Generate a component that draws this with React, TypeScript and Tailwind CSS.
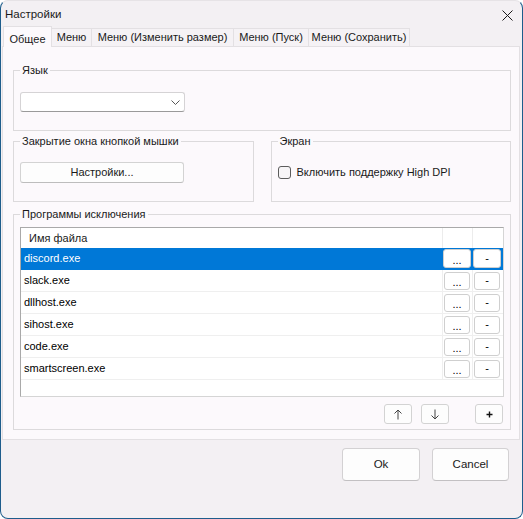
import React from "react";

const files = ["discord.exe", "slack.exe", "dllhost.exe", "sihost.exe", "code.exe", "smartscreen.exe"];

function GroupBox({ label, className, children }: { label: string; className?: string; children: React.ReactNode }) {
  return (
    <fieldset className={"min-w-0 border border-[#dcdadc] px-[6px] " + (className ?? "")}>
      <legend className="px-[2px] text-[11px] leading-[14px] text-[#1a1a1a]">{label}</legend>
      {children}
    </fieldset>
  );
}

function CellButton({ children, selected }: { children: React.ReactNode; selected?: boolean }) {
  return (
    <div
      className={
        "flex items-center justify-center rounded-[3px] border border-[#cfcfcf] bg-white text-[11px] leading-none text-black " +
        (selected ? "h-[19px] w-[28px]" : "h-[18px] w-[26px]")
      }
    >
      {children}
    </div>
  );
}

function SmallButton({ children }: { children: React.ReactNode }) {
  return (
    <div className="flex h-[20px] w-[28px] items-center justify-center rounded-[3px] border border-[#d3d3d3] bg-[#fdfdfd]">
      {children}
    </div>
  );
}

export default function App() {
  return (
    <div className="h-[519px] w-[523px] bg-white font-['Liberation_Sans',Arial,sans-serif] text-[#1a1a1a]">
      <div className="flex h-full flex-col overflow-hidden rounded-[8px] border border-[#1e5d8c] border-t-[#e6e3e6] bg-[#f3f0f3]">
        {/* title bar */}
        <div className="flex h-[25px] items-center justify-between pl-[4px] pr-[9px] pt-[3px]">
          <span className="text-[11.5px] leading-none">Настройки</span>
          <svg width="11" height="11" viewBox="0 0 11 11">
            <path d="M0.5 0.5 L10.5 10.5 M10.5 0.5 L0.5 10.5" stroke="#1a1a1a" strokeWidth="1" />
          </svg>
        </div>

        {/* tabs */}
        <div className="flex h-[20px] items-end pl-[2px] text-[11px]">
          <div className="relative z-10 -mb-px flex h-[21px] w-[49px] items-start justify-center border border-b-0 border-[#e3e0e3] bg-[#fcf9fc] pt-[4px]">
            Общее
          </div>
          <div className="flex h-[18px] w-[40px] items-center justify-center border-r border-t border-[#e3e0e3] bg-[#f5f2f5]">
            Меню
          </div>
          <div className="flex h-[18px] w-[142px] items-center justify-center border-r border-t border-[#e3e0e3] bg-[#f5f2f5]">
            Меню (Изменить размер)
          </div>
          <div className="flex h-[18px] w-[75px] items-center justify-center border-r border-t border-[#e3e0e3] bg-[#f5f2f5]">
            Меню (Пуск)
          </div>
          <div className="flex h-[18px] w-[101px] items-center justify-center border-r border-t border-[#e3e0e3] bg-[#f5f2f5]">
            Меню (Сохранить)
          </div>
        </div>

        {/* tab page */}
        <div className="ml-[1px] mr-[2px] flex flex-col border border-[#e3e0e3] bg-[#fcf9fc] pb-[9px] pl-[10px] pr-[8px] pt-[16px]">
          <GroupBox label="Язык" className="pb-[18px]">
            <div className="mt-[15px] flex h-[20px] w-[165px] items-center justify-end rounded-[3px] border border-[#d5d3d5] border-b-[#9a9a9a] bg-white pr-[4px]">
              <svg width="9" height="5" viewBox="0 0 9 5">
                <path d="M0.5 0.5 L4.5 4.5 L8.5 0.5" stroke="#555" strokeWidth="1" fill="none" />
              </svg>
            </div>
          </GroupBox>

          <div className="mt-[3px] grid grid-cols-2 gap-[17px]">
            <GroupBox label="Закрытие окна кнопкой мышки" className="pb-[18px]">
              <div className="mt-[14px] flex h-[21px] w-[164px] items-center justify-center rounded-[3px] border border-[#d3d3d3] border-b-[#bdbdbd] bg-[#fdfdfd] text-[11px]">
                Настройки...
              </div>
            </GroupBox>
            <GroupBox label="Экран" className="pb-[18px]">
              <div className="mt-[14px] flex h-[21px] items-center gap-[6px] text-[11px]">
                <div className="h-[13px] w-[13px] rounded-[3px] border border-[#5c5c5c] bg-[#f7f5f7]" />
                <span>Включить поддержку High DPI</span>
              </div>
            </GroupBox>
          </div>

          <GroupBox label="Программы исключения" className="mt-[5px] pb-[5px]">
            <div className="mt-[6px] flex h-[170px] flex-col border border-[#a9a9a9] border-b-[#d5d5d5] border-r-[#d5d5d5] bg-white text-[11px]">
              <div className="flex h-[20px] shrink-0">
                <div className="flex flex-1 items-center pl-[8px]">Имя файла</div>
                <div className="w-[30px] border-l border-[#ececec]" />
                <div className="w-[31px] border-l border-[#ececec]" />
              </div>
              {files.map((f, i) => {
                const sel = i === 0;
                return (
                  <div
                    key={f}
                    className={
                      "flex h-[22px] shrink-0 border-b " +
                      (sel ? "border-[#0078d7] bg-[#0078d7] text-white" : "border-[#efefef] text-black")
                    }
                  >
                    <div className="flex flex-1 items-center pl-[3px]">{f}</div>
                    <div className={"flex w-[30px] items-center justify-center border-l pr-[1px] " + (sel ? "border-[#0078d7]" : "border-[#efefef]")}>
                      <CellButton selected={sel}>
                        <span className="mt-[4px]">...</span>
                      </CellButton>
                    </div>
                    <div className={"flex w-[31px] items-center justify-center border-l pr-[2px] " + (sel ? "border-[#0078d7]" : "border-[#efefef]")}>
                      <CellButton selected={sel}>-</CellButton>
                    </div>
                  </div>
                );
              })}
            </div>

            <div className="mr-[1px] mt-[7px] flex justify-end">
              <SmallButton>
                <svg width="8" height="11" viewBox="0 0 8 11">
                  <path d="M4 10.5 L4 1 M0.5 4.5 L4 1 L7.5 4.5" stroke="#444" strokeWidth="1" fill="none" />
                </svg>
              </SmallButton>
              <div className="ml-[9px]">
                <SmallButton>
                  <svg width="8" height="11" viewBox="0 0 8 11">
                    <path d="M4 0.5 L4 10 M0.5 6.5 L4 10 L7.5 6.5" stroke="#444" strokeWidth="1" fill="none" />
                  </svg>
                </SmallButton>
              </div>
              <div className="ml-[26px]">
                <SmallButton>
                  <svg width="7" height="7" viewBox="0 0 7 7">
                    <path d="M3.5 0.5 L3.5 6.5 M0.5 3.5 L6.5 3.5" stroke="#111" strokeWidth="1.4" fill="none" />
                  </svg>
                </SmallButton>
              </div>
            </div>
          </GroupBox>
        </div>

        {/* dialog buttons */}
        <div className="flex justify-end gap-[12px] pr-[13px] pt-[8px] text-[11.5px]">
          <div className="flex h-[33px] w-[78px] items-center justify-center rounded-[4px] border border-[#d3d1d3] border-b-[#c2c0c2] bg-[#fdfdfd]">
            Ok
          </div>
          <div className="flex h-[33px] w-[77px] items-center justify-center rounded-[4px] border border-[#d3d1d3] border-b-[#c2c0c2] bg-[#fdfdfd]">
            Cancel
          </div>
        </div>
      </div>
    </div>
  );
}
